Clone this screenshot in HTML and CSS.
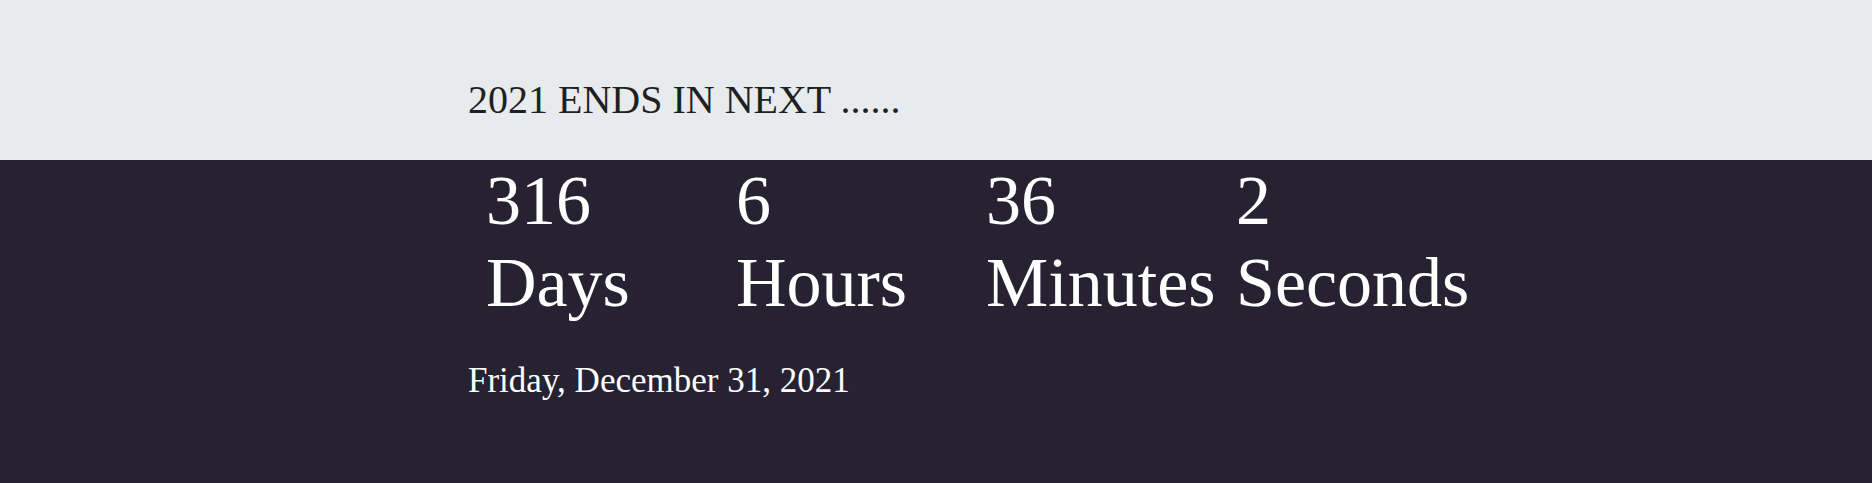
FILE: index.html
```html
<!DOCTYPE html>
<html lang="en">
<head>
<meta charset="utf-8">
<title>2021 Countdown</title>
<link rel="stylesheet" href="styles.css">
</head>
<body>
<header class="top">
  <div class="wrap">
    <h1 class="title">2021 ENDS IN NEXT ......</h1>
  </div>
</header>
<main class="bottom">
  <div class="wrap">
    <div class="countdown">
      <div class="unit"><span class="num">316</span><span class="label">Days</span></div>
      <div class="unit"><span class="num">6</span><span class="label">Hours</span></div>
      <div class="unit"><span class="num">36</span><span class="label">Minutes</span></div>
      <div class="unit"><span class="num">2</span><span class="label">Seconds</span></div>
    </div>
    <p class="date">Friday, December 31, 2021</p>
  </div>
</main>
</body>
</html>
```

FILE: styles.css
```css
html, body {
  margin: 0;
  padding: 0;
  height: 100%;
}
body {
  background: #272232;
  font-family: "Liberation Serif", "Times New Roman", serif;
}
.wrap {
  width: 50%;
  margin: 0 auto;
}
.top {
  background: #e7ebee;
  height: 160px;
  box-sizing: border-box;
  padding-top: 77px;
}
.title {
  margin: 0;
  font-size: 40px;
  font-weight: normal;
  color: #1f1f22;
  line-height: 46px;
}
.bottom {
  color: #ffffff;
}
.countdown {
  display: grid;
  grid-template-columns: repeat(4, 250px);
  padding-left: 18px;
}
.unit {
  display: flex;
  flex-direction: column;
  font-size: 70px;
  line-height: 82px;
  white-space: nowrap;
}
.num, .label {
  display: block;
}
.date {
  margin: 0;
  padding-top: 37px;
  font-size: 35px;
  line-height: 40px;
}
```
